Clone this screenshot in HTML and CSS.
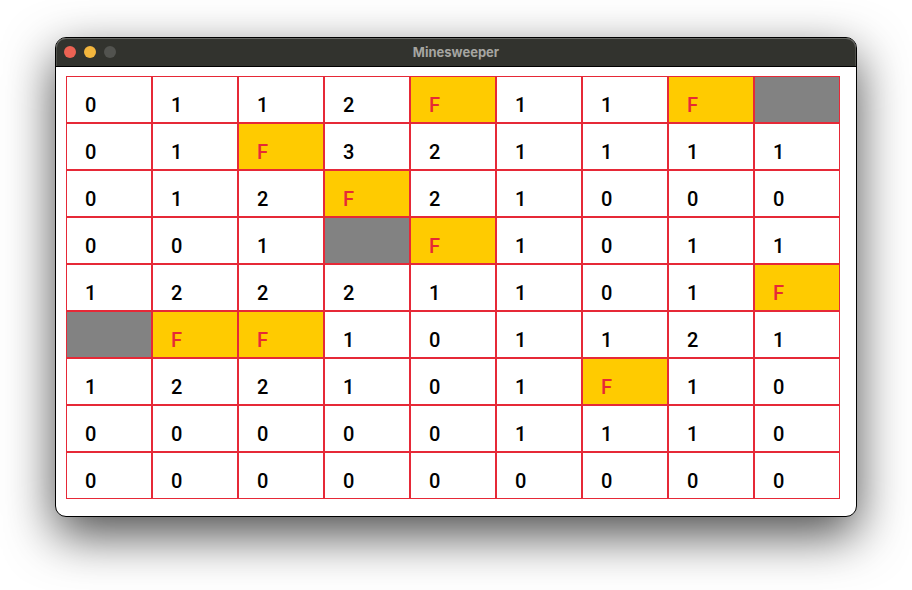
FILE: index.html
```html
<!DOCTYPE html>
<html lang="en">
<head>
<meta charset="utf-8">
<title>Minesweeper</title>
<link rel="stylesheet" href="styles.css">
</head>
<body>
<main class="window">
  <header class="titlebar">
    <div class="controls">
      <button class="dot dot-close" aria-label="Close"></button>
      <button class="dot dot-minimize" aria-label="Minimize"></button>
      <button class="dot dot-zoom" aria-label="Zoom" disabled></button>
    </div>
    <h1 class="title">Minesweeper</h1>
  </header>
  <div class="content">
    <div class="board" id="board"></div>
  </div>
</main>
<script src="board.js"></script>
</body>
</html>
```
FILE: styles.css
```css
* {
  box-sizing: border-box;
}

body {
  margin: 0;
  padding: 37px 55px 73px;
  background: #fff;
  font-family: Roboto, "Liberation Sans", sans-serif;
}

.window {
  border: 1px solid #000;
  border-radius: 11px;
  background: #fff;
  box-shadow: 0 18px 50px rgba(0, 0, 0, 0.7);
}

.titlebar {
  display: grid;
  grid-template-columns: 1fr auto 1fr;
  align-items: center;
  height: 29px;
  padding: 0 8px;
  border-bottom: 1px solid #000;
  border-radius: 10px 10px 0 0;
  background: #32332e;
  box-shadow: inset 0 1px 0 #686965, inset 1px 0 0 #50514c, inset -1px 0 0 #50514c;
}

.controls {
  display: flex;
  gap: 8px;
}

.dot {
  width: 12px;
  height: 12px;
  padding: 0;
  border: 0;
  border-radius: 50%;
}

.dot-close {
  background: #ec6253;
}

.dot-minimize {
  background: #f3b63d;
}

.dot-zoom {
  background: #52534f;
}

.title {
  margin: 0;
  color: #a5a5a1;
  font: 700 13px/16px Inter, sans-serif;
}

.content {
  padding: 9px 16px 17px 10px;
}

.board {
  display: grid;
  grid-template-columns: repeat(9, 1fr);
  grid-auto-rows: 47px;
}

.cell {
  padding: 10px 0 0 18px;
  border: 1px solid #e62937;
  border-radius: 0;
  background: #fff;
  color: #000;
  font: 500 20px/24px Roboto, "Liberation Sans", sans-serif;
  text-align: left;
}

.flag {
  background: #ffcb00;
  color: #e62937;
}

.covered {
  background: #828282;
}
```
FILE: board.js
```js
// One character per cell: a digit, F for a flag, # for a covered cell.
const rows = [
  "0112F11F#",
  "01F321111",
  "012F21000",
  "001#F1011",
  "12221101F",
  "#FF101121",
  "122101F10",
  "000001110",
  "000000000",
];

const board = document.getElementById("board");

rows.forEach((row, r) => {
  [...row].forEach((mark, c) => {
    const cell = document.createElement("button");
    cell.className = "cell";
    if (mark === "F") cell.classList.add("flag");
    if (mark === "#") {
      cell.classList.add("covered");
      cell.setAttribute("aria-label", `Covered, row ${r + 1}, column ${c + 1}`);
    } else {
      cell.textContent = mark;
    }
    board.append(cell);
  });
});
```
